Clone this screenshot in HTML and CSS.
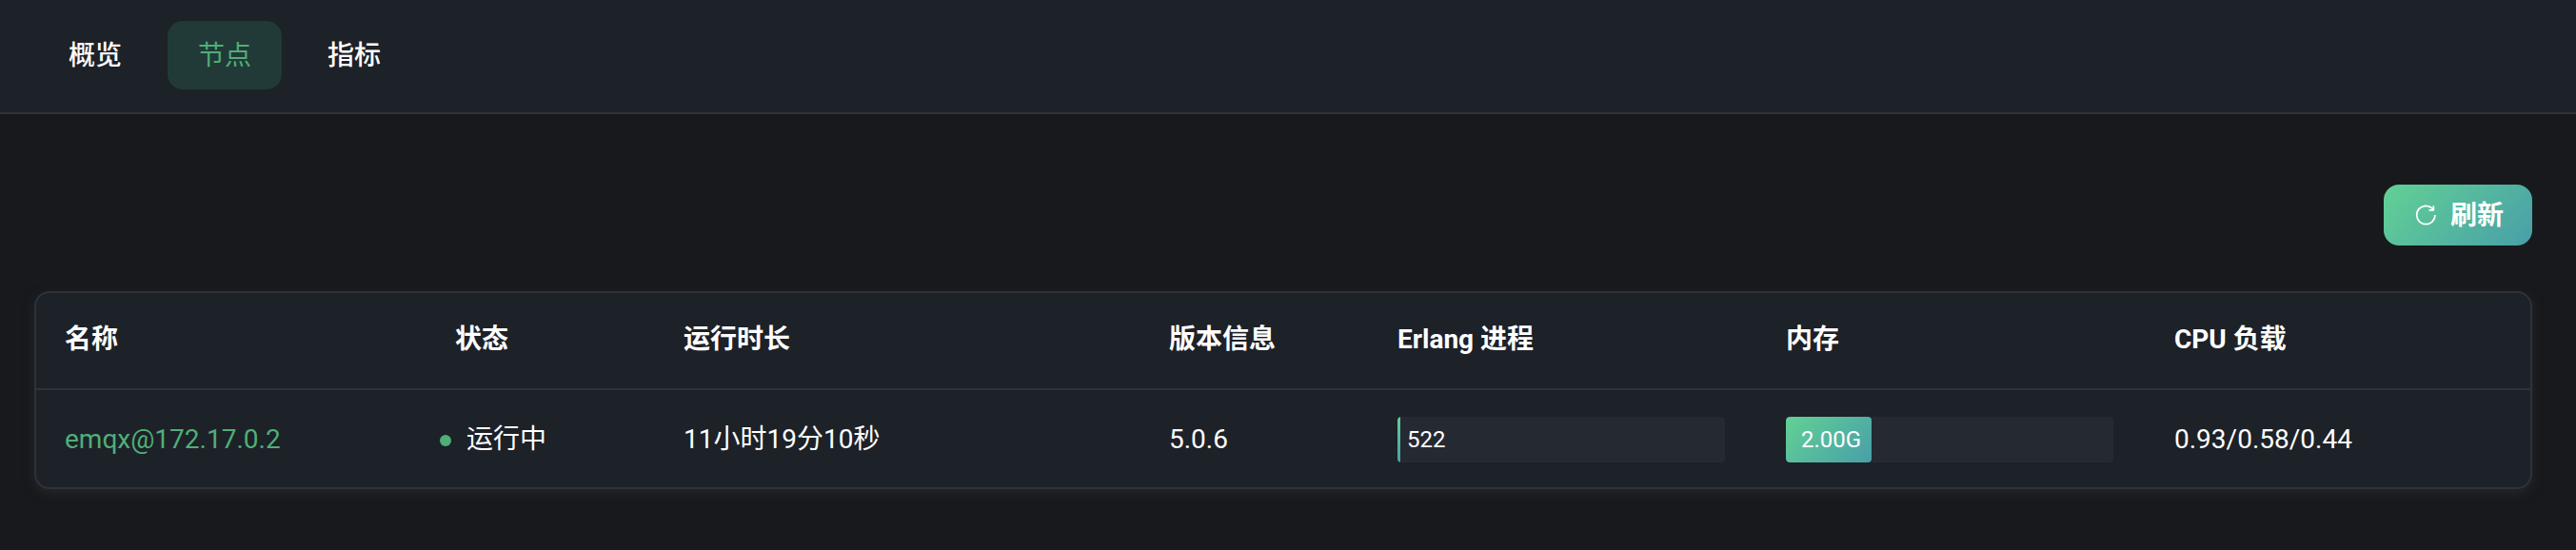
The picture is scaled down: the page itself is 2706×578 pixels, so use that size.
FILE: index.html
```html
<!DOCTYPE html>
<html lang="zh-CN">
<head>
<meta charset="utf-8">
<title>节点</title>
<link rel="stylesheet" href="styles.css">
</head>
<body>
<nav class="tabs">
  <a class="tab">概览</a>
  <a class="tab active">节点</a>
  <a class="tab">指标</a>
</nav>
<main class="content">
  <div class="toolbar">
    <button class="refresh">
      <svg class="icon" viewBox="0 0 1024 1024"><path fill="currentColor" d="M784.512 230.272v-50.56a32 32 0 1 1 64 0v149.056a32 32 0 0 1-32 32H667.52a32 32 0 1 1 0-64h92.992A320 320 0 1 0 524.8 833.152a320 320 0 0 0 320-320h64a384 384 0 0 1-384 384 384 384 0 0 1-384-384 384 384 0 0 1 643.712-282.88z"/></svg>
      <span class="label">刷新</span>
    </button>
  </div>
  <section class="table">
    <div class="row head">
      <div class="cell">名称</div>
      <div class="cell">状态</div>
      <div class="cell">运行时长</div>
      <div class="cell">版本信息</div>
      <div class="cell">Erlang 进程</div>
      <div class="cell">内存</div>
      <div class="cell">CPU 负载</div>
    </div>
    <div class="row">
      <div class="cell"><a class="link">emqx@172.17.0.2</a></div>
      <div class="cell status"><i class="dot"></i><span>运行中</span></div>
      <div class="cell">11小时19分10秒</div>
      <div class="cell">5.0.6</div>
      <div class="cell"><div class="bar"><div class="fill thin"></div><span class="outside">522</span></div></div>
      <div class="cell"><div class="bar"><div class="fill memory"><span>2.00G</span></div></div></div>
      <div class="cell">0.93/0.58/0.44</div>
    </div>
  </section>
</main>
</body>
</html>
```
FILE: styles.css
```css
* { box-sizing: border-box; }
body {
  margin: 0;
  min-height: 578px;
  background: #18191c;
  color: #fff;
  font-family: Roboto, "Noto Sans CJK SC", sans-serif;
  font-size: 28px;
  line-height: 40px;
}
.tabs {
  display: flex;
  gap: 16px;
  height: 120px;
  padding: 22px 40px 0;
  background: #1d2128;
  border-bottom: 2px solid #2e323a;
}
.tab {
  height: 72px;
  padding: 1px 32px 0;
  line-height: 72px;
  border-radius: 16px;
  font-weight: 500;
}
.tab.active {
  color: #50ae78;
  background: #223a37;
  font-weight: 400;
}
.content { padding: 74px 46px 0 36px; }
.toolbar {
  display: flex;
  justify-content: flex-end;
  margin-bottom: 48px;
}
.refresh {
  display: flex;
  align-items: center;
  gap: 12px;
  height: 64px;
  padding: 0 30px;
  border: 0;
  border-radius: 16px;
  color: #fff;
  font: bold 28px/62px Roboto, "Noto Sans CJK SC", sans-serif;
  background: linear-gradient(132deg, #62d195 0%, #489fa8 100%);
}
.icon { width: 28px; height: 28px; }
.label { padding-top: 2px; }
.table {
  height: 208px;
  border: 2px solid #2e323a;
  border-radius: 16px;
  background: #1d2128;
  box-shadow: 0 4px 12px rgba(46, 48, 56, 0.6);
}
.row {
  display: grid;
  grid-template-columns: 408px 240px 510px 240px 408px 408px 1fr;
  align-items: center;
  height: 104px;
}
.head {
  height: 102px;
  padding-bottom: 2px;
  border-bottom: 2px solid #2e323a;
  font-weight: 700;
}
.cell { padding: 0 32px; white-space: nowrap; }
.cell:first-child { padding-left: 30px; }
.link { color: #50ae78; }
.status {
  display: flex;
  align-items: center;
  gap: 16px;
  padding: 0 0 0 16px;
}
.dot {
  width: 12px;
  height: 12px;
  margin-top: 2px;
  border-radius: 50%;
  background: #50ae78;
}
.bar {
  display: flex;
  height: 48px;
  overflow: hidden;
  border-radius: 4px;
  background: #252932;
  font-size: 24px;
  line-height: 48px;
}
.fill {
  border-radius: 4px;
  background: linear-gradient(132deg, #62d195 0%, #489fa8 100%);
}
.thin { width: 3px; border-radius: 4px 0 0 4px; }
.outside { padding-left: 7px; }
.memory { width: 90px; padding-left: 16px; }
```
